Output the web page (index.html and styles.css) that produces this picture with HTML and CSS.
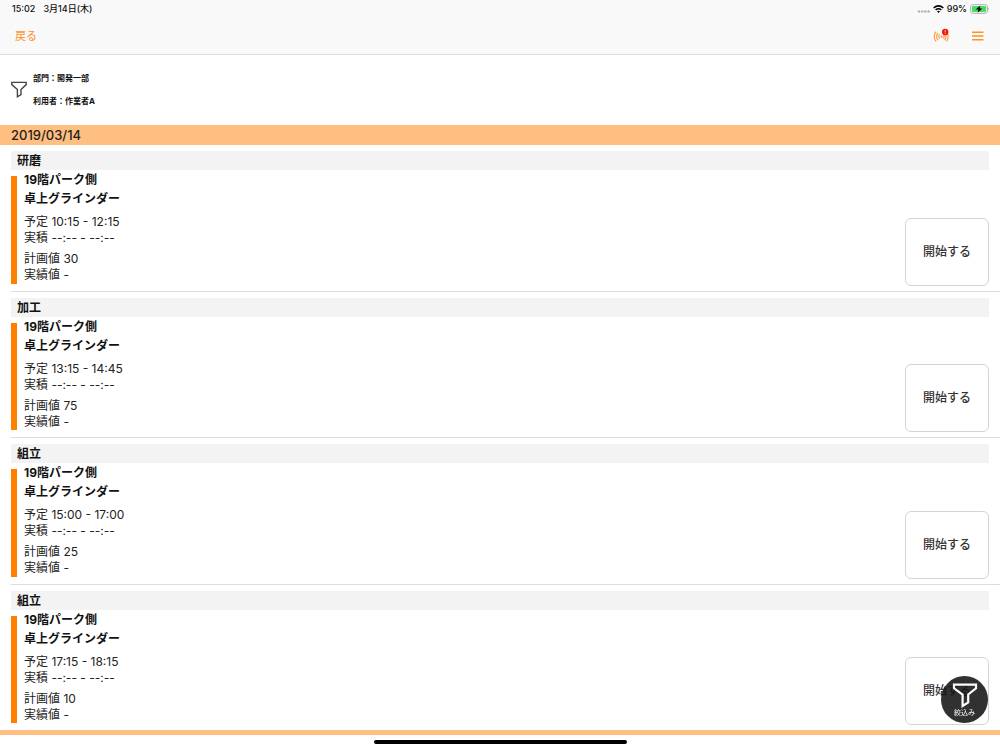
FILE: index.html
```html
<!DOCTYPE html>
<html lang="ja">
<head>
<meta charset="utf-8">
<meta name="viewport" content="width=device-width, initial-scale=1">
<title>作業一覧</title>
<link rel="stylesheet" href="styles.css">
</head>
<body>
<header class="top">
  <div class="status">
    <div class="status-left"><span>15:02</span><span>3月14日(木)</span></div>
    <div class="status-right">
      <svg width="13" height="10" viewBox="0 0 13 10" fill="#b4b4b4" aria-hidden="true"><circle cx="2" cy="7.500" r="1.300"/><circle cx="5.200" cy="7.500" r="1.300"/><circle cx="8.400" cy="7.500" r="1.300"/><circle cx="11.600" cy="7.500" r="1.300"/></svg>
      <svg width="11" height="8" viewBox="0 0 11 8" fill="none" stroke="#000" stroke-width="1.500" aria-hidden="true"><path d="M.6 3Q5.500-1.200 10.400 3M2.600 5Q5.500 2.500 8.400 5"/><path d="M4 6.300Q5.500 5 7 6.300L5.500 7.900z" fill="#000" stroke="none"/></svg>
      <span>99%</span>
      <svg width="19" height="10" viewBox="0 0 19 10" aria-hidden="true"><rect x=".5" y=".7" width="17" height="8.600" rx="2.500" fill="#fff" stroke="#999" stroke-width=".8"/><rect x="1.800" y="2" width="14.400" height="6" rx="1.300" fill="#4cd964"/><path d="M18.200 3.500q1.200 1.500 0 3z" fill="#999"/><path d="M10.400 1.500L5.600 5.500h2.800L7.600 8.700 12.400 4.500H9.600z" fill="#000"/></svg>
    </div>
  </div>
  <nav class="bar">
    <a class="back" href="#">戻る</a>
    <div class="tools">
      <button class="icon-button" type="button" aria-label="通信状態">
        <svg width="18" height="16" viewBox="0 0 18 16" fill="none" stroke="#ff9a3c" aria-hidden="true"><path d="M3 3.600Q-.6 8.500 3 13.400M5 4.800Q2.200 8.500 5 12.200M6.600 6.400Q5 8.500 6.600 10.600M13.400 3.600Q17 8.500 13.400 13.400M11.600 4.800Q14.400 8.500 11.600 12.200M10.400 6.400Q11.800 8.500 10.400 10.600" stroke-width="1.100"/><circle cx="8.500" cy="8.700" r="1.100" fill="#ff9a3c" stroke="none"/><circle cx="12.200" cy="4" r="3.200" fill="#f5140c" stroke="none"/><path d="M12.200 2v2.400M12.200 5.100v.8" stroke="#fff" stroke-width=".7"/></svg>
      </button>
      <button class="icon-button" type="button" aria-label="メニュー">
        <svg width="12" height="10" viewBox="0 0 12 10" stroke="#ff9128" stroke-width="1.400" aria-hidden="true"><path d="M0 1.300h11.500M0 5h11.500M0 8.700h11.500"/></svg>
      </button>
    </div>
  </nav>
</header>
<section class="filter">
  <svg width="16" height="18" viewBox="0 0 16 18" fill="none" stroke="#444" stroke-width="1.400" aria-hidden="true"><path d="M.8 1.400h14.400v2.200L10 8.600v5L6.400 15.800V8.600L.8 3.600z"/></svg>
  <div class="filter-text"><p>部門：開発一部</p><p>利用者：作業者A</p></div>
</section>
<h1 class="date">2019/03/14</h1>
<main class="list">
  <article class="item">
    <h2 class="process">研磨</h2>
    <div class="detail">
      <div class="info">
        <h3 class="name">19階パーク側<br>卓上グラインダー</h3>
        <p class="pair">予定 10:15 - 12:15<br>実積 --:-- - --:--</p>
        <p class="pair">計画値 30<br>実績値 -</p>
      </div>
      <button class="start" type="button">開始する</button>
    </div>
  </article>
  <article class="item">
    <h2 class="process">加工</h2>
    <div class="detail">
      <div class="info">
        <h3 class="name">19階パーク側<br>卓上グラインダー</h3>
        <p class="pair">予定 13:15 - 14:45<br>実積 --:-- - --:--</p>
        <p class="pair">計画値 75<br>実績値 -</p>
      </div>
      <button class="start" type="button">開始する</button>
    </div>
  </article>
  <article class="item">
    <h2 class="process">組立</h2>
    <div class="detail">
      <div class="info">
        <h3 class="name">19階パーク側<br>卓上グラインダー</h3>
        <p class="pair">予定 15:00 - 17:00<br>実積 --:-- - --:--</p>
        <p class="pair">計画値 25<br>実績値 -</p>
      </div>
      <button class="start" type="button">開始する</button>
    </div>
  </article>
  <article class="item">
    <h2 class="process">組立</h2>
    <div class="detail">
      <div class="info">
        <h3 class="name">19階パーク側<br>卓上グラインダー</h3>
        <p class="pair">予定 17:15 - 18:15<br>実積 --:-- - --:--</p>
        <p class="pair">計画値 10<br>実績値 -</p>
      </div>
      <button class="start" type="button">開始する</button>
    </div>
  </article>
</main>
<footer class="home"><div class="home-bar"></div></footer>
<button class="fab" type="button">
  <svg width="26" height="26" viewBox="0 0 26 26" fill="none" stroke="#fff" stroke-width="2.200" aria-hidden="true"><path d="M2 2.700h22v3.600L16.200 12.500v8L10.600 24V12.500L2 6.300z"/></svg>
  <span>絞込み</span>
</button>
</body>
</html>
```
FILE: styles.css
```css
* { box-sizing: border-box; }

body {
  margin: 0;
  min-height: 100vh;
  display: flex;
  flex-direction: column;
  background: #fff;
  color: #111;
  font: 12px/16px Inter, "Noto Sans CJK JP", sans-serif;
}

h1, h2, h3, p { margin: 0; }

button {
  padding: 0;
  border: 0;
  background: none;
  font: inherit;
  cursor: pointer;
}

svg { display: block; }

.top {
  background: #f9f9f9;
  border-bottom: 1px solid #dcdcdc;
}

.status {
  display: flex;
  justify-content: space-between;
  height: 18px;
  padding: 0 11px 0 12px;
  font-size: 9px;
  line-height: 18px;
  font-weight: 500;
}

.status-left { display: flex; gap: 8px; }

.status-right {
  display: flex;
  align-items: center;
  gap: 3px;
}

.bar {
  display: flex;
  align-items: center;
  justify-content: space-between;
  height: 36px;
  padding: 0 16px 0 15px;
}

.back {
  color: #ff9128;
  font-size: 11px;
  text-decoration: none;
}

.tools {
  display: flex;
  align-items: center;
  gap: 21px;
}

.filter {
  display: flex;
  align-items: center;
  gap: 6px;
  padding: 12px 11px;
}

.filter-text {
  font-size: 8px;
  line-height: 23px;
  font-weight: 700;
}

.date {
  padding: 0 11px;
  background: #ffbf80;
  color: #222;
  font-size: 13px;
  line-height: 20px;
  font-weight: 500;
}

.list {
  flex: 1;
  display: flex;
  flex-direction: column;
  border-bottom: 5px solid #ffbf80;
}

.item {
  flex: 1;
  display: flex;
  flex-direction: column;
  margin-left: 11px;
  padding: 6px 11px 0 0;
  border-bottom: 1px solid #ddd;
}

.item:last-child { border-bottom: 0; }

.process {
  padding: 0 6px;
  background: #f3f3f3;
  font-size: 12px;
  line-height: 19px;
  font-weight: 700;
}

.detail {
  flex: 1;
  display: grid;
  grid-template-columns: 6px 1fr auto;
  column-gap: 7px;
  padding-bottom: 5px;
}

.detail::before {
  content: "";
  margin: 6px 0 2px;
  background: #ff8000;
}

.name {
  padding-bottom: 1px;
  font-size: 12px;
  line-height: 19px;
  font-weight: 700;
}

.pair {
  margin-top: 5px;
  color: #222;
}

.start {
  align-self: end;
  width: 84px;
  height: 68px;
  border: 1px solid #d4d4d4;
  border-radius: 6px;
  background: #fff;
  color: #333;
  font-weight: 500;
}

.home {
  display: flex;
  justify-content: center;
  height: 15px;
  padding-top: 5px;
}

.home-bar {
  width: 25.3%;
  height: 4px;
  border-radius: 2px;
  background: #000;
}

.fab {
  position: fixed;
  right: 12px;
  bottom: 27px;
  display: flex;
  flex-direction: column;
  align-items: center;
  width: 47px;
  height: 47px;
  padding-top: 6px;
  border-radius: 50%;
  background: rgba(20, 20, 20, 0.88);
  color: #fff;
  font-size: 7px;
  line-height: 9px;
}
```
